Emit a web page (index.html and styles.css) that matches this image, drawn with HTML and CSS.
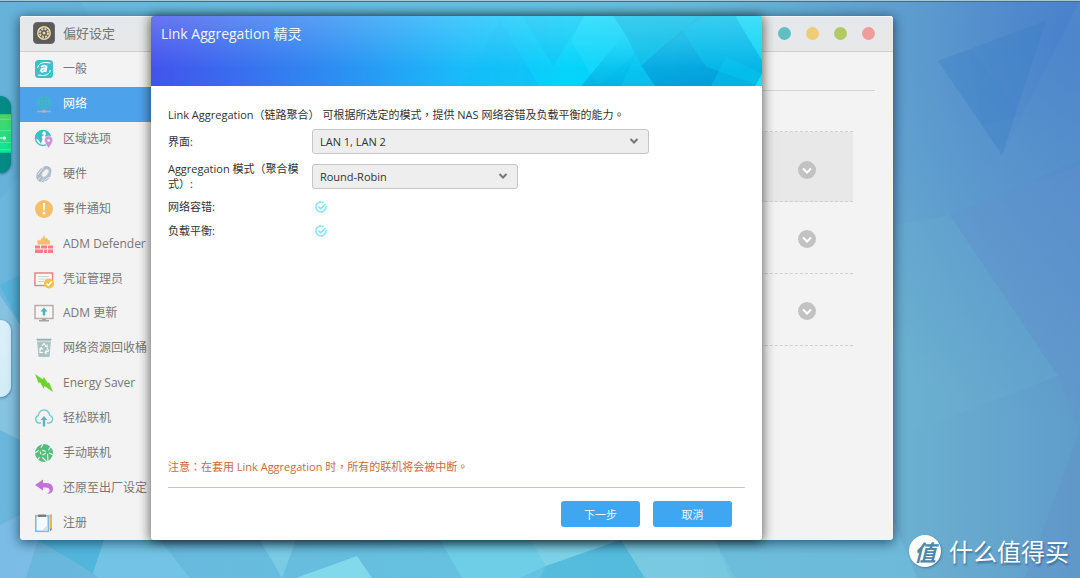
FILE: index.html
```html
<!DOCTYPE html>
<html lang="zh-Hant">
<head>
<meta charset="utf-8">
<meta name="viewport" content="width=device-width, initial-scale=1">
<title>Link Aggregation 精灵</title>
<link rel="stylesheet" href="styles.css">
</head>
<body>
<div class="desktop">
  <svg class="wallpaper" viewBox="0 0 1080 578" preserveAspectRatio="none" aria-hidden="true">
    <defs>
      <linearGradient id="sky" x1="0" y1="0" x2="1" y2="0">
        <stop offset="0" stop-color="#6ab6dc"/><stop offset=".5" stop-color="#64c3e0"/>
        <stop offset=".84" stop-color="#6bb0d0"/><stop offset="1" stop-color="#5f9ccb"/>
      </linearGradient>
      <radialGradient id="corner" gradientUnits="userSpaceOnUse" cx="1080" cy="40" r="380">
        <stop offset="0" stop-color="#457dcb" stop-opacity=".9"/><stop offset=".4" stop-color="#4a80cc" stop-opacity=".45"/><stop offset="1" stop-color="#4a80cc" stop-opacity="0"/>
      </radialGradient>
    </defs>
    <rect width="1080" height="578" fill="url(#sky)"/>
    <rect width="1080" height="578" fill="url(#corner)"/>
    <path d="M0 0H80L110 60L0 200Z" fill="#62add8" opacity=".35"/>
    <path d="M0 285L20 275V325Z" fill="#4eb2da" opacity=".7"/>
    <path d="M0 295L20 325V440L0 430Z" fill="#a0d0e6" opacity=".5"/>
    <path d="M0 525L20 515L38 540L26 578H0Z" fill="#83bfe9" opacity=".7"/>
    <path d="M38 540L93 573L104 540Z" fill="#47b4dc" opacity=".7"/>
    <path d="M104 540L93 573L98 578H190L160 540Z" fill="#76c8e8" opacity=".7"/>
    <path d="M260 540L282 578L296 540Z" fill="#86d4eb" opacity=".6"/>
    <path d="M296 578L357 556L372 578Z" fill="#8be0ef" opacity=".8"/>
    <path d="M440 540H530L546 566L520 578H462Z" fill="#72d1e8" opacity=".8"/>
    <path d="M530 540H620L546 566Z" fill="#83d6e8" opacity=".8"/>
    <path d="M546 566L621 540L645 578H540Z" fill="#50b9de" opacity=".75"/>
    <path d="M621 540H715L735 578H645Z" fill="#80cfe4" opacity=".7"/>
    <path d="M893 520L917 578H730L715 540Z" fill="#6fc0e0" opacity=".6"/>
    <path d="M938 61L1046 21L1002 155Z" fill="#397fc7" opacity=".35"/>
    <path d="M970 50L1022 115L982 125Z" fill="#3e7fc5" opacity=".1"/>
    <path d="M950 215L1080 165V430L1058 376Z" fill="#668fca" opacity=".25"/>
    <path d="M893 225L950 215L1058 376L893 440Z" fill="#6db2d1" opacity=".2"/>
    <path d="M982 165L1002 155L1080 0V160L950 215Z" fill="#5f9bcd" opacity=".2"/>
    <path d="M1080 430V578H1025Z" fill="#648fc9" opacity=".3"/>
  </svg>
  <div class="topline"></div>
  <div class="dock dock-store">
    <svg viewBox="0 0 10 76" preserveAspectRatio="none" aria-hidden="true">
      <defs><linearGradient id="band" x1="0" y1="0" x2="0" y2="1"><stop offset="0" stop-color="#4fd363"/><stop offset="1" stop-color="#0be39c"/></linearGradient></defs>
      <rect y="18" width="10" height="38" fill="url(#band)"/>
      <path d="M0 23H10M0 34H10M0 46H10M0 53H10" stroke="#6cf09f" stroke-width=".6"/>
      <path d="M0 41.500H4" stroke="#fff"/><circle cx="4" cy="41.500" r="1.600" fill="#fff"/>
    </svg>
  </div>
  <div class="dock dock-light"></div>

  <main class="window">
    <header class="titlebar">
      <svg class="titleicon" viewBox="0 0 22 22" aria-hidden="true">
        <rect x=".5" y=".5" width="21" height="21" rx="3.500" fill="#5b5b5b" stroke="#6c6c6c"/>
        <circle cx="11" cy="11" r="6.200" fill="none" stroke="#ead9a3" stroke-width="1.500"/>
        <circle cx="11" cy="11" r="4" fill="none" stroke="#ead9a3" stroke-width="2" stroke-dasharray="2 1.140"/>
        <circle cx="11" cy="11" r="1.500" fill="#ead9a3"/>
      </svg>
      <h1>偏好设定</h1>
      <div class="dots">
        <button class="dot teal" aria-label="说明"></button>
        <button class="dot yellow" aria-label="最小化"></button>
        <button class="dot green" aria-label="最大化"></button>
        <button class="dot red" aria-label="关闭"></button>
      </div>
    </header>
    <div class="columns">
      <nav class="sidebar">
        <a href="#general"><svg viewBox="0 0 20 20" aria-hidden="true"><rect x="1" y="1" width="18" height="18" rx="3.500" fill="#3fc0c8"/><path d="M7 8Q10 5.500 12.500 7.500L11.500 13M12 9.500Q7 9 7 11.700Q8 14 11.500 11" fill="none" stroke="#fff" stroke-width="1.900"/><path d="M3.500 9Q5 3 12 3.500L16.500 4M16.500 11Q15 16.500 8.500 16.500L4 16" fill="none" stroke="#fff" stroke-width="1"/></svg>一般</a>
        <a href="#network" class="active" aria-current="page"><svg viewBox="0 0 20 20" aria-hidden="true"><circle cx="10" cy="8.500" r="7.200" fill="#3db9c6"/><path d="M10 1.500V15.500M3 8.500H17M4.500 5H15.500M4.500 12H15.500" stroke="#4aa5dd" stroke-width=".7" fill="none"/><ellipse cx="10" cy="8.500" rx="3.500" ry="7" fill="none" stroke="#4aa5dd" stroke-width=".7"/><path d="M10 15.500V17.500M3 17.500H17" stroke="#a3adb5" stroke-width="1.300"/><rect x="7.500" y="16.500" width="5" height="2" rx="1" fill="#b5b5b5"/></svg>网络</a>
        <a href="#region"><svg viewBox="0 0 20 20" aria-hidden="true"><circle cx="9" cy="9" r="7.500" fill="#fff" stroke="#3fbec7" stroke-width="1.500"/><path d="M2 5Q5 1 9.500 1.500L8 5L10 6L7.500 8L8.500 10L7 15L4.500 11L1.500 9ZM11 2L16 5L16.500 9L13 9L11 7L12 5Z" fill="#3fbec7"/><path d="M10.500 11.200A4.100 4.100 0 0 1 18.800 11.200Q18.500 14 14.600 19.500Q10.800 14 10.500 11.200Z" fill="#c994d8" stroke="#f4f4f4" stroke-width=".6"/><circle cx="14.600" cy="11.500" r="1.300" fill="#fff"/></svg>区域选项</a>
        <a href="#hardware"><svg viewBox="0 0 20 20" aria-hidden="true"><g transform="rotate(38 10 10)"><path d="M6 3Q10 -1 14 3L16.500 8V13Q14 19 10 19Q5.500 18.500 4 14V8Z" fill="#adbbc9"/><ellipse cx="10.500" cy="8.500" rx="2.600" ry="4.500" fill="#f4f4f4" stroke="#c6d0da"/><path d="M5.500 5V14.500M16 9L14 15M9 14.500V19M12.500 14V18.500" stroke="#f4f4f4" stroke-width=".7"/></g></svg>硬件</a>
        <a href="#notice"><svg viewBox="0 0 20 20" aria-hidden="true"><circle cx="10" cy="10" r="9" fill="#f5bf68"/><path d="M8.800 4H11.200L10.800 11.500H9.200Z" fill="#fff"/><circle cx="10" cy="14.300" r="1.300" fill="#fff"/></svg>事件通知</a>
        <a href="#defender"><svg viewBox="0 0 20 20" aria-hidden="true"><path d="M4 10.500Q2.500 7 4.500 5.500L6 7L8 3.500L9 4.500L10 .5L11.500 5L13 3.500L14 6.500L15.500 6Q17 8 15.500 10.500Z" fill="#f3be6c"/><path d="M1 11.500H6V14.500H1ZM7 11.500H13V14.500H7ZM14 11.500H19V14.500H14ZM1 15.500H9V19H1ZM10 15.500H13V19H10ZM14 15.500H19V19H14Z" fill="#f27f82"/></svg>ADM Defender</a>
        <a href="#cert"><svg viewBox="0 0 20 20" aria-hidden="true"><rect x="1" y="4" width="17.500" height="12.500" fill="#fff" stroke="#f27f82" stroke-width="1.500"/><path d="M4 7.500H15M4 10H13M4 12.500H10" stroke="#cdcdcd"/><circle cx="15" cy="14.500" r="5" fill="#f5c242"/><path d="M12.500 14.500L14.500 16.500L17.700 12.500" fill="none" stroke="#fff" stroke-width="1.500"/></svg>凭证管理员</a>
        <a href="#update"><svg viewBox="0 0 20 20" aria-hidden="true"><rect x="1" y="2.500" width="18" height="13" fill="#f5f5f5" stroke="#b8b0ac" stroke-width="1.500"/><path d="M8 15.500H12V17H15V18.500H5V17H8Z" fill="#aaa29e"/><path d="M10 4.500L13.500 8.500H11.200V12.500H8.800V8.500H6.500Z" fill="#46b4bb"/></svg>ADM 更新</a>
        <a href="#recycle"><svg viewBox="0 0 20 20" aria-hidden="true"><path d="M3 2H17L15.500 19H4.500Z" fill="#a9c4c3"/><path d="M2.500 1.500H17.500" stroke="#8fb1af" stroke-width="1.500"/><path d="M3 3.200H17" stroke="#e9f0f0" stroke-width=".7"/><path d="M8 8L10 5.500L12 8.500M13 9.500L14.500 13L11.500 14.500M9 14.500H6L6 12L7.500 9.500M11 8.500H13V6.500M12.500 12.500L11 14.500L12.500 16M5.500 11L7.500 9.500L8.500 11.500" fill="none" stroke="#fff" stroke-width="1.100"/></svg>网络资源回收桶</a>
        <a href="#energy"><svg viewBox="0 0 20 20" aria-hidden="true"><path d="M1 1L9 6.500L9.800 4L14 10.500L15 9L19 19L10.500 13L9.500 15.500L6 9L4.800 10.500Z" fill="#6cd22f"/></svg>Energy Saver</a>
        <a href="#ezconnect"><svg viewBox="0 0 20 20" aria-hidden="true"><path d="M7 15H4.500A4 4 0 0 1 4.200 7.500Q5.500 2 10 2Q14.500 2 15.800 7.300A4 4 0 0 1 15.500 15H13" fill="none" stroke="#7ccbd2" stroke-width="1.400"/><path d="M10 8L13.500 12H11.200V18.500H8.800V12H6.500Z" fill="#58b8c0"/></svg>轻松联机</a>
        <a href="#manual"><svg viewBox="0 0 20 20" aria-hidden="true"><circle cx="10" cy="10" r="9" fill="#54bd7c"/><path d="M6 6.500L13.500 9L7 13ZM6 6.500L1 10M6 6.500L9 1M13.500 9L17 3M13.500 9L19 12M7 13L3 17M7 13L13 19M13.500 9L14 19" fill="none" stroke="#f3f3f3" stroke-width="1.100"/><circle cx="6.300" cy="6.500" r="2" fill="#54bd7c"/><circle cx="13.500" cy="9" r="2" fill="#54bd7c"/><circle cx="7" cy="13" r="2" fill="#54bd7c"/></svg>手动联机</a>
        <a href="#factory"><svg viewBox="0 0 20 20" aria-hidden="true"><path d="M1 7L9 1.500V5H12.500Q19 5 19 11Q19 15.500 13 16Q16 14 15.500 11.500Q15 9.500 12 9.500H9V12.500Z" fill="#c472d8"/></svg>还原至出厂设定</a>
        <a href="#register"><svg viewBox="0 0 20 20" aria-hidden="true"><rect x="1.800" y="2.800" width="12.500" height="15.500" fill="#f7fafd" stroke="#79bdf0" stroke-width="1.600"/><path d="M13.500 12L8 17.500H13.500Z" fill="#dadfe3"/><path d="M4 1.500H12V4H4Z" fill="#788083"/><path d="M15.500 4H18V15.500H15.500Z" fill="#f4b53f"/><path d="M15.500 1.500H18V4H15.500Z" fill="#f29f70"/><path d="M15.500 15.500H18L16.750 18.500Z" fill="#8d7355"/></svg>注册</a>
      </nav>
      <section class="pane" aria-label="网络">
        <div class="tabs"></div>
        <div class="lanlist">
          <div class="lan selected"><button class="expand" aria-label="展开 LAN 1"><svg viewBox="0 0 18 18"><path d="M5 7.500L9 11.500L13 7.500"/></svg></button></div>
          <div class="lan"><button class="expand" aria-label="展开 LAN 2"><svg viewBox="0 0 18 18"><path d="M5 7.500L9 11.500L13 7.500"/></svg></button></div>
          <div class="lan"><button class="expand" aria-label="展开 PPPoE"><svg viewBox="0 0 18 18"><path d="M5 7.500L9 11.500L13 7.500"/></svg></button></div>
        </div>
      </section>
    </div>

    <form class="wizard" role="dialog" aria-labelledby="wizard-title">
      <header class="banner">
        <svg class="bannerart" viewBox="0 0 611 69" preserveAspectRatio="none" aria-hidden="true">
          <defs>
            <linearGradient id="g1" x1="0" y1="0" x2="1" y2="0"><stop offset="0" stop-color="#4353ed"/><stop offset=".27" stop-color="#2f87f1"/><stop offset=".5" stop-color="#1abafa"/><stop offset=".68" stop-color="#06d4fb"/><stop offset="1" stop-color="#02c4f3"/></linearGradient>
            <linearGradient id="g2" x1="0" y1="0" x2="0" y2="1"><stop offset="0" stop-color="#fff" stop-opacity=".2"/><stop offset=".75" stop-color="#fff" stop-opacity="0"/></linearGradient>
            <linearGradient id="g3" x1="0" y1="0" x2=".2" y2="1"><stop offset="0" stop-color="#12b7e2" stop-opacity=".6"/><stop offset="1" stop-color="#0398d8"/></linearGradient>
            <linearGradient id="g4" x1="0" y1="0" x2="0" y2="1"><stop offset="0" stop-color="#06c5ef" stop-opacity="0"/><stop offset="1" stop-color="#02a8e0"/></linearGradient>
          </defs>
          <rect width="611" height="69" fill="url(#g1)"/>
          <path d="M349 5L310 69H388Z" fill="#12bdf5" opacity=".55"/>
          <path d="M371 0L402 49L433 0Z" fill="#12b5ee" opacity=".3"/>
          <path d="M433 0L420 25L447 69L486 36L462 0Z" fill="#3aecff" opacity=".2"/>
          <path d="M474 17L430 69H504L490 49L486 36Z" fill="url(#g4)" opacity=".75"/>
          <path d="M462 0H553L490 49L474 17Z" fill="#10b4df" opacity=".55"/>
          <path d="M486 36L470 69H504L490 49Z" fill="#14cdf4" opacity=".35"/>
          <path d="M547 0L490 49L504 69H604L611 57V42L584 0Z" fill="url(#g3)" opacity=".85"/>
          <path d="M562 0L529 11L555 50L611 69V42L584 0Z" fill="#06c5ef" opacity=".55"/>
          <path d="M575 40L611 57L604 69H560Z" fill="#06c5ef" opacity=".5"/>
          <path d="M584 0L611 44V0Z" fill="#19ddf7" opacity=".7"/>
          <path d="M611 57L604 69H611Z" fill="#19ddf7"/>
          <rect width="611" height="69" fill="url(#g2)"/>
        </svg>
        <h2 id="wizard-title">Link Aggregation 精灵</h2>
      </header>
      <div class="content">
        <p class="intro">Link Aggregation（链路聚合） 可根据所选定的模式，提供 NAS 网络容错及负载平衡的能力。</p>
        <div class="fields">
          <label for="lan">界面:</label>
          <div class="selectbox wide">
            <select id="lan"><option>LAN 1, LAN 2</option></select>
            <svg viewBox="0 0 10 8" aria-hidden="true"><path d="M1.500 2L5 5.500L8.500 2"/></svg>
          </div>
          <label for="mode">Aggregation 模式（聚合模式）:</label>
          <div class="selectbox narrow">
            <select id="mode"><option>Round-Robin</option></select>
            <svg viewBox="0 0 10 8" aria-hidden="true"><path d="M1.500 2L5 5.500L8.500 2"/></svg>
          </div>
        </div>
        <dl class="features">
          <dt>网络容错:</dt>
          <dd><svg viewBox="0 0 12 12" role="img" aria-label="支持"><path d="M10.800 5A5 5 0 1 1 8.500 1.700M3.500 5.500L5.800 7.800L10.500 3"/></svg></dd>
          <dt>负载平衡:</dt>
          <dd><svg viewBox="0 0 12 12" role="img" aria-label="支持"><path d="M10.800 5A5 5 0 1 1 8.500 1.700M3.500 5.500L5.800 7.800L10.500 3"/></svg></dd>
        </dl>
        <p class="note">注意：在套用 Link Aggregation 时，所有的联机将会被中断。</p>
      </div>
      <footer class="actions">
        <button type="button">下一步</button>
        <button type="button">取消</button>
      </footer>
    </form>
  </main>

  <div class="watermark"><span class="mark">值</span><span>什么值得买</span></div>
</div>
</body>
</html>
```
FILE: styles.css
```css
* { box-sizing: border-box; }

body {
  margin: 0;
  font-family: "Open Sans", "Noto Sans CJK TC", sans-serif;
  font-size: 11px;
  color: #333;
}

h1, h2, p, dl, dd { margin: 0; font-weight: 400; }

button, select { font: inherit; }

.desktop {
  position: relative;
  display: flex;
  min-height: 100vh;
  padding: 16px 187px 38px 20px;
  overflow: hidden;
}

.wallpaper {
  position: absolute;
  inset: 0;
  width: 100%;
  height: 100%;
}

.topline {
  position: absolute;
  inset: 0 0 auto;
  height: 2px;
  background: #a9c6d3;
  border-bottom: 1px solid #3d6e91;
}

.dock {
  position: absolute;
  left: 0;
  width: 11px;
  height: 77px;
  border-radius: 0 11px 11px 0;
  overflow: hidden;
  box-shadow: 0 1px 3px rgba(0, 50, 80, .6);
}

.dock svg { display: block; width: 100%; height: 100%; }
.dock-store { top: 96px; background: #048b86; }
.dock-light { top: 320px; background: linear-gradient(#dceffa, #d2edf6); }

.window {
  position: relative;
  flex: 1;
  display: flex;
  flex-direction: column;
  background: #f3f3f3;
  border-radius: 3px;
  box-shadow: 0 2px 12px 1px rgba(0, 25, 45, .6);
}

.titlebar {
  display: flex;
  align-items: center;
  height: 36px;
  padding: 0 18px 2px 13px;
  background: linear-gradient(#e5e8ec, #e8e8e8);
  border-top: 1px solid #f7f8f9;
  border-bottom: 1px solid #cfcfcf;
  border-radius: 3px 3px 0 0;
}

.titlebar h1 {
  margin-left: 8px;
  font-size: 13px;
  line-height: 18px;
  color: #757575;
}

.titleicon { width: 22px; height: 22px; }

.dots { display: flex; gap: 15px; margin-left: auto; }

.dot {
  width: 13px;
  height: 13px;
  padding: 0;
  border: 0;
  border-radius: 50%;
}

.teal { background: #61bfc2; }
.yellow { background: #f0cc76; }
.green { background: #b1ca66; }
.red { background: #f19c9c; }

.columns { flex: 1; display: flex; }

.sidebar {
  display: grid;
  grid-auto-rows: 1fr;
  width: 160px;
}

.sidebar a {
  display: flex;
  align-items: center;
  gap: 9px;
  padding-left: 14px;
  font-size: 12px;
  line-height: 18px;
  white-space: nowrap;
  color: #777;
  text-decoration: none;
}

.sidebar a svg { flex: none; width: 20px; height: 20px; }

.sidebar .active { background: #4da2ec; color: #fff; }

.pane { flex: 1; padding: 0 18px; }

.tabs { height: 39px; border-bottom: 1px solid #d5d5d5; }

.lanlist { margin: 40px 22px 0 0; border-top: 1px dashed #d0d0d0; }

.lan {
  display: flex;
  align-items: center;
  justify-content: flex-end;
  height: 72px;
  padding: 2px 37px 0 0;
  border-bottom: 1px dashed #d0d0d0;
}

.lan.selected { height: 70px; padding-top: 6px; background: #e8e8e8; }

.expand {
  width: 18px;
  height: 18px;
  padding: 0;
  border: 0;
  border-radius: 50%;
  background: #c2c2c2;
}

.expand svg {
  display: block;
  fill: none;
  stroke: #fff;
  stroke-width: 2;
}

.wizard {
  position: absolute;
  inset: 0 15%;
  display: flex;
  flex-direction: column;
  background: #fff;
  border-radius: 3px;
  box-shadow: 0 1px 12px 1px rgba(0, 0, 0, .6);
}

.banner {
  position: relative;
  height: 70px;
  padding: 8px 10px;
  border-radius: 3px 3px 0 0;
  overflow: hidden;
}

.bannerart {
  position: absolute;
  inset: 0;
  width: 100%;
  height: 100%;
}

.banner h2 {
  position: relative;
  font-size: 14px;
  line-height: 20px;
  color: #f1f6ff;
}

.content {
  flex: 1;
  display: flex;
  flex-direction: column;
  margin: 0 17px;
  padding: 21px 0 11px;
  border-bottom: 1px solid #c5c3d0;
}

.intro { margin-bottom: 6px; line-height: 16px; }

.fields {
  display: grid;
  grid-template-columns: 136px 1fr;
  gap: 7px 8px;
  align-items: center;
}

.fields label { line-height: 15px; }

.selectbox { position: relative; }
.wide { max-width: 337px; }
.narrow { max-width: 206px; }

.selectbox select {
  display: block;
  width: 100%;
  height: 25px;
  padding: 0 24px 0 7px;
  appearance: none;
  border: 1px solid #c6c6c6;
  border-radius: 3px;
  background: #eee;
  color: #333;
}

.selectbox svg {
  position: absolute;
  top: 8px;
  right: 10px;
  width: 10px;
  height: 8px;
  fill: none;
  stroke: #777;
  stroke-width: 2;
  pointer-events: none;
}

.features {
  display: grid;
  grid-template-columns: 147px 1fr;
  line-height: 24px;
  margin-top: 4px;
}

.features dd { display: flex; align-items: center; }

.features svg {
  width: 12px;
  height: 12px;
  fill: none;
  stroke: #85e3f8;
  stroke-width: 1.5;
}

.note {
  margin-top: auto;
  line-height: 18px;
  color: #c9693f;
}

.actions {
  display: flex;
  justify-content: flex-end;
  gap: 13px;
  padding: 13px 30px;
}

.actions button {
  width: 79px;
  height: 26px;
  padding: 0;
  border: 0;
  border-radius: 3px;
  background: #3fa6f2;
  color: #f1f8ff;
}

.watermark {
  position: absolute;
  right: 11px;
  bottom: 11px;
  display: flex;
  align-items: center;
  gap: 8px;
  font-family: "Noto Sans CJK SC", sans-serif;
  font-size: 24px;
  line-height: 32px;
  color: #fff;
  text-shadow: 1px 2px 2px rgba(20, 60, 100, .5);
}

.mark {
  width: 32px;
  height: 32px;
  border-radius: 50%;
  background: #fff;
  box-shadow: 1px 1px 2px rgba(20, 60, 100, .4);
  color: #4b89a7;
  font-size: 22px;
  font-style: italic;
  font-weight: 700;
  text-align: center;
  text-shadow: none;
}
```
